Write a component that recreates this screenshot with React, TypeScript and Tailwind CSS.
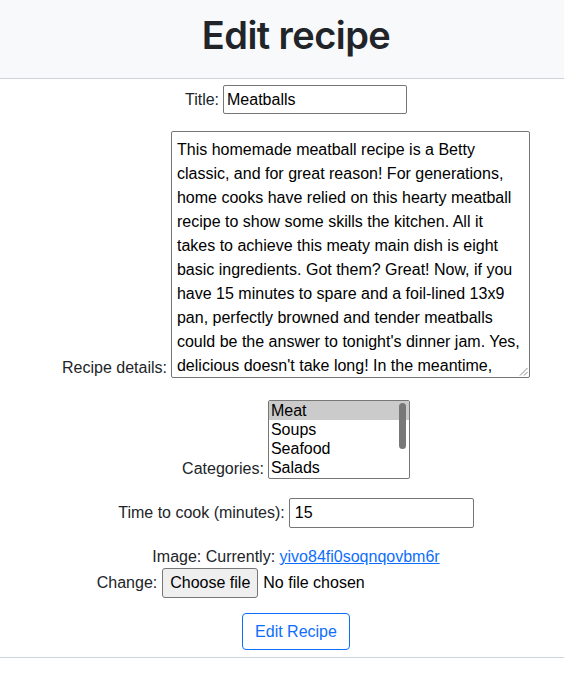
const recipeLines = [
  "This homemade meatball recipe is a Betty",
  "classic, and for great reason! For generations,",
  "home cooks have relied on this hearty meatball",
  "recipe to show some skills the kitchen. All it",
  "takes to achieve this meaty main dish is eight",
  "basic ingredients. Got them? Great! Now, if you",
  "have 15 minutes to spare and a foil-lined 13x9",
  "pan, perfectly browned and tender meatballs",
  "could be the answer to tonight's dinner jam. Yes,",
  "delicious doesn't take long! In the meantime,",
];

const categories = ["Meat", "Soups", "Seafood", "Salads"];

export default function App() {
  return (
    <div className="min-h-[674px] bg-white font-['Liberation_Sans',Arial,sans-serif] text-[16px] leading-6 text-[#212529]">
      <header className="box-border flex h-[79px] items-center justify-center border-b border-[#ced4da] bg-[#f8f9fa] pb-[9px] pl-[28px]">
        <h1 className="font-['Inter',sans-serif] text-[38px] font-semibold leading-none tracking-[-0.015em] text-[#212529]">
          Edit recipe
        </h1>
      </header>

      <form className="flex flex-col items-center pl-[28px] pt-[6px]">
        {/* title */}
        <div className="flex items-center gap-1">
          <label>Title:</label>
          <div className="box-border h-[29px] w-[184px] rounded-[2px] border border-[#767676] px-[3px] leading-[27px] text-black">
            Meatballs
          </div>
        </div>

        {/* details */}
        <div className="mt-[17px] flex items-end gap-1">
          <label className="mb-[-2px]">Recipe details:</label>
          <div className="relative box-border h-[247px] w-[359px] overflow-hidden rounded-[2px] border border-[#767676] pl-[5px] pt-[6px] text-black">
            {recipeLines.map((l) => (
              <div key={l} className="whitespace-nowrap leading-6">
                {l}
              </div>
            ))}
            <svg
              className="absolute bottom-[1px] right-[1px]"
              width="9"
              height="9"
              viewBox="0 0 9 9"
            >
              <path d="M8.5 1 L1 8.5 M8.5 5 L5 8.5" stroke="#8a8a8a" strokeWidth="1" />
            </svg>
          </div>
        </div>

        {/* categories */}
        <div className="mt-[22px] flex items-end gap-1">
          <label className="mb-[-2px]">Categories:</label>
          <div className="relative box-border h-[79px] w-[142px] overflow-hidden rounded-[2px] border border-[#767676] text-black">
            {categories.map((c, i) => (
              <div
                key={c}
                className={
                  "h-[19px] pl-[2px] leading-[19px] " +
                  (i === 0 ? "bg-[#cbcbcb]" : "")
                }
              >
                {c}
              </div>
            ))}
            <div className="absolute right-[3px] top-[2px] h-[46px] w-[7px] rounded-full bg-[#787878]" />
          </div>
        </div>

        {/* time */}
        <div className="mt-[19px] flex items-center gap-1">
          <label>Time to cook (minutes):</label>
          <div className="box-border h-[30px] w-[185px] rounded-[2px] border border-[#767676] px-[5px] leading-[28px] text-black">
            15
          </div>
        </div>

        {/* image */}
        <div className="mt-[17px] flex flex-col items-center">
          <div className="leading-6">
            Image: Currently:{" "}
            <a href="#" className="text-[#0d6efd] underline">
              yivo84fi0soqnqovbm6r
            </a>
          </div>
          <div className="mt-[-1px] flex items-center">
            <label className="mr-[5px]">Change:</label>
            <div className="flex w-[333px] items-center">
              <button
                type="button"
                className="box-border h-[30px] rounded-[3px] border border-[#767676] bg-[#efefef] px-[7px] text-black"
              >
                Choose file
              </button>
              <span className="ml-[5px] text-black">No file chosen</span>
            </div>
          </div>
        </div>

        <button
          type="button"
          className="mt-[15px] box-border h-[37px] rounded-[4px] border border-[#0d6efd] px-3 text-[#0d6efd]"
        >
          Edit Recipe
        </button>
      </form>

      <div className="mt-[7px] h-px bg-[#ced4da]" />
    </div>
  );
}
